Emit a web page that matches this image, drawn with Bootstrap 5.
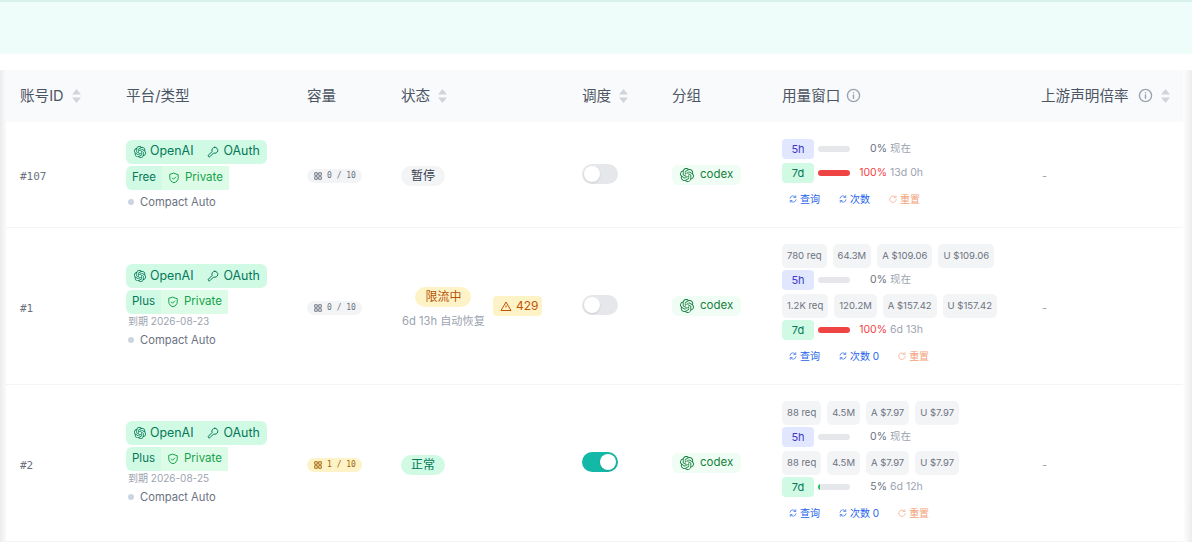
<!DOCTYPE html>
<html lang="zh-CN">
<head>
    <meta charset="UTF-8">
    <meta name="viewport" content="width=device-width, initial-scale=1.0">
    <title>账号管理</title>
    <link href="https://cdn.jsdelivr.net/npm/bootstrap@5.3.0/dist/css/bootstrap.min.css" rel="stylesheet">
    <style>
        body {
            font-family: Inter, "Noto Sans CJK SC", sans-serif;
            background: #fff;
            overflow: hidden;
        }
        .top-band {
            height: 54px;
            background: #effdfa;
            border-top: 2px solid #d8f0ea;
            margin-bottom: 16px;
        }
        .tbl-wrap {
            padding: 0 9px 0 6px;
            background:
                linear-gradient(to right, #ececec, #fff) left top / 8px 100% no-repeat,
                linear-gradient(to left, #ececec, #fff) right top / 9px 100% no-repeat;
        }
        .acct-table {
            table-layout: fixed;
            width: 1177px;
            margin: 0;
        }
        .acct-table th, .acct-table td {
            padding: 0 0 0 14px;
            vertical-align: middle;
            border-bottom: 1px solid #f3f4f6;
            background: #fff;
        }
        .acct-table th {
            height: 52px;
            padding-top: 2px;
            background: #f9fafb;
            color: #4b5563;
            font-size: 14.6px;
            font-weight: 400;
            white-space: nowrap;
            border-bottom: 0;
        }
        .row-s td { height: 105px; }
        .row-l td { height: 157px; }
        .sort-ico { width: 9px; height: 14px; margin-left: 8px; vertical-align: -2px; }
        .info-ico { width: 15px; height: 15px; margin-left: 6px; vertical-align: -2px; color: #9ca3af; }
        .info-ico.wide { margin-left: 9px; }
        .id-txt { font-family: "DejaVu Sans Mono", monospace; font-size: 11px; color: #6b7280; }

        .pf-pill {
            display: inline-flex;
            align-items: center;
            height: 24px;
            font-size: 12.4px;
            color: #047857;
            background: #d1fae5;
            white-space: nowrap;
        }
        .pf-main { border-radius: 6px; padding: 0 7px 0 8px; gap: 14px; }
        .pf-main span { display: inline-flex; align-items: center; gap: 4px; }
        .pf-ico { width: 12px; height: 12px; }
        .pf-sub { display: flex; margin-top: 2px; }
        .pf-plan { border-radius: 6px 0 0 6px; padding: 0 6px; font-size: 11.5px; }
        .pf-priv { background: #dcfce7; color: #16a34a; padding: 0 6px; gap: 5px; font-size: 11.5px; }
        .pf-date { font-size: 10px; color: #9ca3af; line-height: 14px; padding-left: 2px; }
        .pf-compact { font-size: 11.2px; color: #6b7280; line-height: 14px; display: flex; align-items: center; gap: 6px; padding-left: 2px; margin-top: 5px; }
        .dot-ico { width: 6px; height: 6px; border-radius: 50%; background: #cbd5e1; }

        .cap-pill {
            display: inline-flex;
            align-items: center;
            gap: 5px;
            height: 14px;
            padding: 0 6px 0 7px;
            border-radius: 7px;
            font-family: "DejaVu Sans Mono", monospace;
            font-size: 8px;
            background: #f3f4f6;
            color: #6b7280;
            white-space: nowrap;
        }
        .cap-pill.warn { background: #fef3c7; color: #a16207; }
        .cap-ico { width: 8px; height: 8px; }

        .st-pill {
            display: inline-block;
            height: 20px;
            line-height: 20px;
            padding: 0 10px;
            border-radius: 10px;
            font-size: 12px;
            background: #f3f4f6;
            color: #374151;
        }
        .st-pill.limit { background: #fef3c7; color: #b45309; }
        .st-pill.ok { background: #d1fae5; color: #047857; }
        .st-wrap { padding-left: 1px; }
        .st-note { font-size: 11.2px; color: #9ca3af; line-height: 14px; margin-top: 7px; white-space: nowrap; }
        .err-chip {
            display: inline-flex;
            align-items: center;
            gap: 4px;
            height: 20px;
            padding: 0 4px 0 7px;
            border-radius: 4px;
            font-size: 12px;
            background: #fef3c7;
            color: #c2540a;
        }
        .toggle-sw {
            width: 36px;
            height: 20px;
            margin-bottom: 1px;
            padding: 2px;
            border-radius: 10px;
            background: #e5e7eb;
            display: flex;
        }
        .toggle-sw::after {
            content: "";
            width: 16px;
            height: 16px;
            border-radius: 50%;
            background: #fff;
            box-shadow: 0 1px 2px rgba(0,0,0,.12);
        }
        .toggle-sw.on { background: #14b8a6; justify-content: flex-end; }
        .grp-pill {
            display: flex;
            width: fit-content;
            align-items: center;
            gap: 6px;
            height: 20px;
            margin-top: 1px;
            padding: 0 8px;
            border-radius: 6px;
            font-size: 11.5px;
            background: #f0fdf4;
            color: #15803d;
        }
        .grp-ico { width: 14px; height: 14px; }

        .use-row { display: flex; align-items: center; height: 20px; }
        .use-row + .chip-row, .use-row + .use-row { margin-top: 4px; }
        .chip-row + .use-row { margin-top: 2px; }
        .win-tag {
            width: 32px;
            height: 20px;
            line-height: 20px;
            text-align: center;
            border-radius: 4px;
            font-size: 11px;
        }
        .win-5h { background: #e0e7ff; color: #4338ca; }
        .win-7d { background: #d1fae5; color: #047857; }
        .use-bar { width: 32px; height: 6px; margin-left: 4px; border-radius: 3px; background: #e5e7eb; overflow: hidden; }
        .use-fill { height: 100%; }
        .use-pct { width: 37px; text-align: right; font-size: 10.5px; color: #6b7280; }
        .use-pct.full { color: #ef4444; }
        .use-time { margin-left: 3px; font-size: 10.5px; color: #9ca3af; white-space: nowrap; }
        .chip-row { display: flex; gap: 6px; }
        .stat-chip {
            height: 24px;
            line-height: 24px;
            padding: 0 5px;
            border-radius: 5px;
            font-size: 9.5px;
            background: #f3f4f6;
            color: #6b7280;
            white-space: nowrap;
        }
        .act-row { display: flex; gap: 19px; margin-top: 9px; padding: 0 0 4px 7px; font-size: 10px; line-height: 14px; }
        .act-row span { display: inline-flex; align-items: center; gap: 3px; color: #2563eb; white-space: nowrap; }
        .act-row svg { width: 8px; height: 8px; opacity: .7; }
        .act-row .act-reset { color: #f4a27a; }
        .act-row .act-reset svg { opacity: .7; }
        .dash-txt { font-size: 11px; color: #9ca3af; padding-left: 1px; }
    </style>
</head>
<body>
    <svg width="0" height="0" class="position-absolute">
        <defs>
            <symbol id="i-openai" viewBox="0 0 24 24"><path fill="currentColor" d="M22.2819 9.8211a5.9847 5.9847 0 0 0-.5157-4.9108 6.0462 6.0462 0 0 0-6.5098-2.9A6.0651 6.0651 0 0 0 4.9807 4.1818a5.9847 5.9847 0 0 0-3.9977 2.9 6.0462 6.0462 0 0 0 .7427 7.0966 5.98 5.98 0 0 0 .511 4.9107 6.051 6.051 0 0 0 6.5146 2.9001A5.9847 5.9847 0 0 0 13.2599 24a6.0557 6.0557 0 0 0 5.7718-4.2058 5.9894 5.9894 0 0 0 3.9977-2.9001 6.0557 6.0557 0 0 0-.7475-7.0729zm-9.022 12.6081a4.4755 4.4755 0 0 1-2.8764-1.0408l.1419-.0804 4.7783-2.7582a.7948.7948 0 0 0 .3927-.6813v-6.7369l2.02 1.1686a.071.071 0 0 1 .038.052v5.5826a4.504 4.504 0 0 1-4.4945 4.4944zm-9.6607-4.1254a4.4708 4.4708 0 0 1-.5346-3.0137l.142.0852 4.783 2.7582a.7712.7712 0 0 0 .7806 0l5.8428-3.3685v2.3324a.0804.0804 0 0 1-.0332.0615L9.74 19.9502a4.4992 4.4992 0 0 1-6.1408-1.6464zM2.3408 7.8956a4.485 4.485 0 0 1 2.3655-1.9728V11.6a.7664.7664 0 0 0 .3879.6765l5.8144 3.3543-2.0201 1.1685a.0757.0757 0 0 1-.071 0l-4.8303-2.7865A4.504 4.504 0 0 1 2.3408 7.872zm16.5963 3.8558L13.1038 8.364 15.1192 7.2a.0757.0757 0 0 1 .071 0l4.8303 2.7913a4.4944 4.4944 0 0 1-.6765 8.1042v-5.6772a.79.79 0 0 0-.407-.667zm2.0107-3.0231l-.142-.0852-4.7735-2.7818a.7759.7759 0 0 0-.7854 0L9.409 9.2297V6.8974a.0662.0662 0 0 1 .0284-.0615l4.8303-2.7866a4.4992 4.4992 0 0 1 6.6802 4.66zM8.3065 12.863l-2.02-1.1638a.0804.0804 0 0 1-.038-.0567V6.0742a4.4992 4.4992 0 0 1 7.3757-3.4537l-.142.0805L8.704 5.459a.7948.7948 0 0 0-.3927.6813zm1.0976-2.3654l2.602-1.4998 2.6069 1.4998v2.9994l-2.5974 1.4997-2.6067-1.4997Z"/></symbol>
            <symbol id="i-key" viewBox="0 0 24 24"><path fill="none" stroke="currentColor" stroke-width="2" stroke-linecap="round" stroke-linejoin="round" d="M15.5 2.5a6 6 0 1 1-2.3 11.5L6 21.2a2 2 0 0 1-3-3L10.2 11A6 6 0 0 1 15.5 2.5z"/></symbol>
            <symbol id="i-shield" viewBox="0 0 24 24"><path fill="none" stroke="currentColor" stroke-width="2" stroke-linecap="round" stroke-linejoin="round" d="M12 2.5l8.5 3v6c0 5-3.5 8.5-8.5 10-5-1.5-8.5-5-8.5-10v-6zM8.5 12l2.5 2.5 4.5-4.5"/></symbol>
            <symbol id="i-grid" viewBox="0 0 16 16"><g fill="currentColor" fill-opacity=".35" stroke="currentColor" stroke-width="1.6"><rect x="1" y="1" width="6" height="6" rx="1.5"/><rect x="9" y="1" width="6" height="6" rx="1.5"/><rect x="1" y="9" width="6" height="6" rx="1.5"/><rect x="9" y="9" width="6" height="6" rx="1.5"/></g></symbol>
            <symbol id="i-sort" viewBox="0 0 9 14"><path fill="#d1d5db" d="M4.5 0L9 5.5H0zM4.5 14L9 8.5H0z"/></symbol>
            <symbol id="i-info" viewBox="0 0 16 16"><circle cx="8" cy="8" r="6.5" fill="none" stroke="currentColor" stroke-width="1.5"/><path stroke="currentColor" stroke-width="1.6" stroke-linecap="round" d="M8 7.5V11M8 5v.1"/></symbol>
            <symbol id="i-warn" viewBox="0 0 24 24"><path fill="none" stroke="currentColor" stroke-width="2" stroke-linejoin="round" d="M12 4L2 21h20zM12 10.5V15M12 17.5v.1"/></symbol>
            <symbol id="i-sync" viewBox="0 0 16 16"><path fill="none" stroke="currentColor" stroke-width="2" stroke-linecap="round" stroke-linejoin="round" d="M2 6.5A6 6 0 0 1 13 4.5M14 9.5A6 6 0 0 1 3 11.5M13.5 1.5V5H10M2.5 14.5V11H6"/></symbol>
            <symbol id="i-reset" viewBox="0 0 16 16"><path fill="none" stroke="currentColor" stroke-width="2" stroke-linecap="round" stroke-linejoin="round" d="M13.5 5A6.5 6.5 0 1 0 14.5 9M14 1.5V5h-3.5"/></symbol>
        </defs>
    </svg>

    <div class="top-band"></div>

    <div class="tbl-wrap">
        <table class="table acct-table">
            <colgroup>
                <col style="width:106px"><col style="width:181px"><col style="width:94px"><col style="width:181px">
                <col style="width:90px"><col style="width:110px"><col style="width:259px"><col style="width:156px">
            </colgroup>
            <thead>
                <tr>
                    <th>账号ID<svg class="sort-ico"><use href="#i-sort"/></svg></th>
                    <th>平台/类型</th>
                    <th>容量</th>
                    <th>状态<svg class="sort-ico"><use href="#i-sort"/></svg></th>
                    <th>调度<svg class="sort-ico"><use href="#i-sort"/></svg></th>
                    <th>分组</th>
                    <th>用量窗口<svg class="info-ico"><use href="#i-info"/></svg></th>
                    <th>上游声明倍率<svg class="info-ico wide"><use href="#i-info"/></svg><svg class="sort-ico"><use href="#i-sort"/></svg></th>
                </tr>
            </thead>
            <tbody id="acct-rows"></tbody>
        </table>
    </div>

    <script>
        const accounts = [
            { id: 107, plan: "Free", cap: 0, status: "暂停", statusCls: "", on: false, cls: "row-s", acts: ["查询", "次数", "重置"],
              win: [{ tag: "5h", pct: 0, time: "现在" }, { tag: "7d", pct: 100, time: "13d 0h" }] },
            { id: 1, plan: "Plus", date: "2026-08-23", cap: 0, status: "限流中", statusCls: "limit", note: "6d 13h 自动恢复", err: "429", on: false, cls: "row-l", acts: ["查询", "次数 0", "重置"],
              win: [{ tag: "5h", pct: 0, time: "现在", chips: ["780 req", "64.3M", "A $109.06", "U $109.06"] },
                    { tag: "7d", pct: 100, time: "6d 13h", chips: ["1.2K req", "120.2M", "A $157.42", "U $157.42"] }] },
            { id: 2, plan: "Plus", date: "2026-08-25", cap: 1, status: "正常", statusCls: "ok", on: true, cls: "row-l", acts: ["查询", "次数 0", "重置"],
              win: [{ tag: "5h", pct: 0, time: "现在", chips: ["88 req", "4.5M", "A $7.97", "U $7.97"] },
                    { tag: "7d", pct: 5, time: "6d 12h", chips: ["88 req", "4.5M", "A $7.97", "U $7.97"] }] }
        ];

        const icon = (id, cls) => `<svg class="${cls}"><use href="#${id}"/></svg>`;

        function windowHtml(w) {
            let chips = w.chips ? `<div class="chip-row">${w.chips.map(c => `<div class="stat-chip">${c}</div>`).join("")}</div>` : "";
            let fill = w.pct >= 100 ? "#ef4444" : "#22c55e";
            return `${chips}
                <div class="use-row">
                    <div class="win-tag win-${w.tag}">${w.tag}</div>
                    <div class="use-bar"><div class="use-fill" style="width:${w.pct}%;background:${fill}"></div></div>
                    <div class="use-pct ${w.pct >= 100 ? "full" : ""}">${w.pct}%</div>
                    <div class="use-time">${w.time}</div>
                </div>`;
        }

        function statusHtml(a) {
            let pill = `<div class="st-pill ${a.statusCls}">${a.status}</div>`;
            if (!a.err) return pill;
            return `<div class="d-flex align-items-center gap-2 st-wrap">
                <div class="text-center">${pill}<div class="st-note">${a.note}</div></div>
                <div class="err-chip">${icon("i-warn", "pf-ico")}${a.err}</div>
            </div>`;
        }

        document.getElementById("acct-rows").innerHTML = accounts.map(a => `
            <tr class="${a.cls}">
                <td><span class="id-txt">#${a.id}</span></td>
                <td>
                    <div class="pf-pill pf-main"><span>${icon("i-openai", "pf-ico")}OpenAI</span><span>${icon("i-key", "pf-ico")}OAuth</span></div>
                    <div class="pf-sub">
                        <div class="pf-pill pf-plan">${a.plan}</div>
                        <div class="pf-pill pf-priv">${icon("i-shield", "pf-ico")}Private</div>
                    </div>
                    ${a.date ? `<div class="pf-date">到期 ${a.date}</div>` : ""}
                    <div class="pf-compact"><i class="dot-ico"></i>Compact Auto</div>
                </td>
                <td><span class="cap-pill ${a.cap ? "warn" : ""}">${icon("i-grid", "cap-ico")}${a.cap} / 10</span></td>
                <td>${statusHtml(a)}</td>
                <td><div class="toggle-sw ${a.on ? "on" : ""}"></div></td>
                <td><div class="grp-pill">${icon("i-openai", "grp-ico")}codex</div></td>
                <td>
                    ${a.win.map(windowHtml).join("")}
                    <div class="act-row">
                        <span>${icon("i-sync", "")}${a.acts[0]}</span>
                        <span>${icon("i-sync", "")}${a.acts[1]}</span>
                        <span class="act-reset">${icon("i-reset", "")}${a.acts[2]}</span>
                    </div>
                </td>
                <td><span class="dash-txt">-</span></td>
            </tr>`).join("");
    </script>

    <script src="https://cdn.jsdelivr.net/npm/bootstrap@5.3.0/dist/js/bootstrap.bundle.min.js"></script>
</body>
</html>
